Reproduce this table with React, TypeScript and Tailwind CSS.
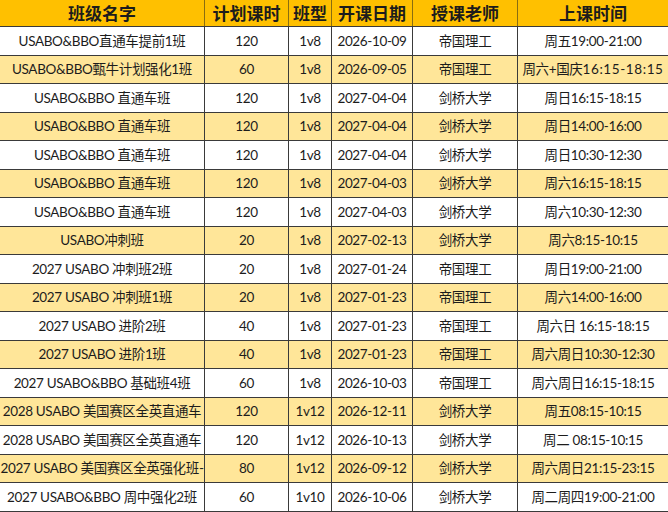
const rows = [
  ["USABO&BBO直通车提前1班", "120", "1v8", "2026-10-09", "帝国理工", "周五19:00-21:00"],
  ["USABO&BBO甄牛计划强化1班", "60", "1v8", "2026-09-05", "帝国理工", "周六+国庆16:15-18:15"],
  ["USABO&BBO 直通车班", "120", "1v8", "2027-04-04", "剑桥大学", "周日16:15-18:15"],
  ["USABO&BBO 直通车班", "120", "1v8", "2027-04-04", "剑桥大学", "周日14:00-16:00"],
  ["USABO&BBO 直通车班", "120", "1v8", "2027-04-04", "剑桥大学", "周日10:30-12:30"],
  ["USABO&BBO 直通车班", "120", "1v8", "2027-04-03", "剑桥大学", "周六16:15-18:15"],
  ["USABO&BBO 直通车班", "120", "1v8", "2027-04-03", "剑桥大学", "周六10:30-12:30"],
  ["USABO冲刺班", "20", "1v8", "2027-02-13", "剑桥大学", "周六8:15-10:15"],
  ["2027 USABO 冲刺班2班", "20", "1v8", "2027-01-24", "帝国理工", "周日19:00-21:00"],
  ["2027 USABO 冲刺班1班", "20", "1v8", "2027-01-23", "帝国理工", "周六14:00-16:00"],
  ["2027 USABO 进阶2班", "40", "1v8", "2027-01-23", "帝国理工", "周六日 16:15-18:15"],
  ["2027 USABO 进阶1班", "40", "1v8", "2027-01-23", "帝国理工", "周六周日10:30-12:30"],
  ["2027 USABO&BBO 基础班4班", "60", "1v8", "2026-10-03", "帝国理工", "周六周日16:15-18:15"],
  ["2028 USABO 美国赛区全英直通车", "120", "1v12", "2026-12-11", "剑桥大学", "周五08:15-10:15"],
  ["2028 USABO 美国赛区全英直通车", "120", "1v12", "2026-10-13", "剑桥大学", "周二 08:15-10:15"],
  ["2027 USABO 美国赛区全英强化班-", "80", "1v12", "2026-09-12", "剑桥大学", "周六周日21:15-23:15"],
  ["2027 USABO&BBO 周中强化2班", "60", "1v10", "2026-10-06", "剑桥大学", "周二周四19:00-21:00"],
];

const headers = ["班级名字", "计划课时", "班型", "开课日期", "授课老师", "上课时间"];
const cols = "grid grid-cols-[205px_84px_43px_81px_105px_150px]";

export default function App() {
  return (
    <div className="w-[668px] h-[512px] overflow-hidden bg-white text-[#1c1c1c] font-['Lato','Noto_Sans_CJK_SC',sans-serif]">
      <div className={`${cols} h-[27px] bg-[#ffc000] border-b border-[#3a3a3a]`}>
        {headers.map((h, i) => (
          <div
            key={h}
            className={`flex items-center justify-center text-[17px] font-bold font-['Noto_Sans_CJK_SC',sans-serif] ${i < 5 ? "border-r border-[#8a6d10]" : ""}`}
          >
            {h}
          </div>
        ))}
      </div>
      {rows.map((r, ri) => (
        <div
          key={ri}
          className={`${cols} h-[28.5px] border-b border-[#3a3a3a] ${ri % 2 === 1 ? "bg-[#ffe699]" : "bg-white"}`}
        >
          {r.map((c, ci) => (
            <div
              key={ci}
              className={`flex items-center justify-center overflow-hidden whitespace-nowrap text-[13.5px] tracking-[-0.35px] ${ci < 5 ? "border-r border-[#3a3a3a]" : ""}`}
            >
              {ri === 1 && ci === 5 ? (
                <span>
                  周六+国庆<span className="tracking-[0.6px]">16:15-18:15</span>
                </span>
              ) : (
                c
              )}
            </div>
          ))}
        </div>
      ))}
    </div>
  );
}
